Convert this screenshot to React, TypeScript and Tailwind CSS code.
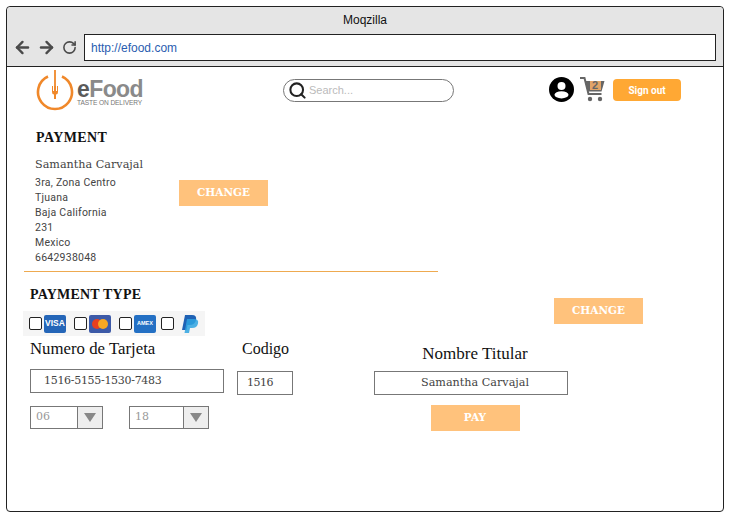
import { ArrowLeft, ArrowRight, RotateCw, Search } from "lucide-react";

const serif = "font-['Liberation_Serif',serif]";
const slab = "font-['DejaVu_Serif',serif]";

function Logo() {
  return (
    <div className="flex w-[114px] items-start">
      <svg width="38" height="42" viewBox="0 0 38 42" className="mt-[2px] shrink-0">
        <path d="M12 7.5 A17 17 0 1 0 26 7.5" fill="none" stroke="#f0882a" strokeWidth="2.6" />
        <path d="M19 1 V24" stroke="#f0882a" strokeWidth="1.8" />
        <path d="M16 17 V23 Q16 25.5 18 25.5 V30 H20 V25.5 Q22 25.5 22 23 V17 H21 V22 H20 V17 H18 V22 H17 V17 Z" fill="#f0882a" />
      </svg>
      <div className="ml-[3px] mt-[12px] whitespace-nowrap font-['Liberation_Sans',sans-serif]">
        <div className="text-[23px] font-bold leading-[20px] tracking-[-0.6px] text-[#8a8a8a]">
          <span className="text-[#5a5a5a]">e</span>Food
        </div>
        <div className="text-[6.6px] leading-[7px] tracking-[-0.1px] text-[#777]">TASTE ON DELIVERY</div>
      </div>
    </div>
  );
}

function CartIcon() {
  return (
    <svg width="25" height="26" viewBox="0 0 25 26">
      <path d="M0 1 H4.5 L8.5 17 H21.5" fill="none" stroke="#666" strokeWidth="2" />
      <path d="M5 4 H24.5 L21.5 14.5 H8 Z" fill="#666" />
      <rect x="10" y="4" width="11" height="9" fill="#e2a468" />
      <text x="15" y="12" textAnchor="middle" fontSize="11" fontWeight="700" fill="#666" fontFamily="Liberation Sans">2</text>
      <circle cx="10" cy="22" r="2.2" fill="#666" />
      <circle cx="20" cy="22" r="2.2" fill="#666" />
    </svg>
  );
}

function UserIcon() {
  return (
    <svg width="25" height="25" viewBox="0 0 25 25">
      <circle cx="12.5" cy="12.5" r="12.5" fill="#000" />
      <circle cx="12.5" cy="9" r="4" fill="#fff" />
      <ellipse cx="12.5" cy="17.8" rx="7" ry="3.6" fill="#fff" />
    </svg>
  );
}

function ChangeButton({ label, className = "" }: { label: string; className?: string }) {
  return (
    <div className={`flex h-[26px] w-[89px] items-center justify-center bg-[#ffc27c] text-[10.5px] font-bold text-white ${slab} ${className}`}>
      {label}
    </div>
  );
}

function Check({ className = "" }: { className?: string }) {
  return <span className={`block h-[13px] w-[13px] shrink-0 rounded-[2px] border border-[#222] bg-white ${className}`} />;
}

function PaymentOptions() {
  return (
    <div className="mt-[7px] ml-[-7px] flex h-[25px] w-[182px] items-center bg-[#f5f5f5] pl-[6px]">
      <Check />
      <span className="ml-[2px] flex h-[18px] w-[22px] items-center justify-center rounded-[2px] bg-[#2566b8] font-['Liberation_Sans',sans-serif] text-[8.5px] font-bold text-white">
        VISA
      </span>
      <Check className="ml-[8px]" />
      <span className="ml-[2px] flex h-[18px] w-[22px] items-center justify-center rounded-[2px] bg-[#3d5aa8]">
        <svg width="16" height="10" viewBox="0 0 16 10">
          <circle cx="5" cy="5" r="5" fill="#e8401f" />
          <circle cx="11" cy="5" r="5" fill="#f7a823" />
        </svg>
      </span>
      <Check className="ml-[8px]" />
      <span className="ml-[2px] flex h-[18px] w-[22px] items-center justify-center rounded-[2px] bg-[#2470c4] font-['Liberation_Sans',sans-serif] text-[5.5px] font-bold text-white">
        AMEX
      </span>
      <Check className="ml-[5px]" />
      <svg width="20" height="20" viewBox="0 0 20 20" className="ml-[5px] shrink-0">
        <path d="M6 1 H13 Q18 1 17 6 Q16 11 10.5 11 H8.5 L7.5 16 H3 Z" fill="#1f62b5" />
        <path d="M8 5 H15 Q20 5 19 9.5 Q18 14 13 14 H11 L10 19 H5.5 Z" fill="#2ea3e0" opacity="0.85" />
      </svg>
    </div>
  );
}

function Select({ value, className = "" }: { value: string; className?: string }) {
  return (
    <div className={`flex h-[23px] border border-[#777] text-[11px] text-[#999] ${slab} ${className}`}>
      <span className="flex flex-1 items-center pl-[5px]">{value}</span>
      <span className="flex w-[25px] items-center justify-center border-l border-[#777] bg-[#eeeeee]">
        <span className="h-0 w-0 border-x-[6px] border-t-[9px] border-x-transparent border-t-[#888]" />
      </span>
    </div>
  );
}

export default function App() {
  return (
    <div className="h-[518px] w-[734px] overflow-hidden bg-white pl-[6px] pt-[6px]">
      <div className="h-[506px] w-[718px] rounded-[4px] border border-[#222]">
        <div className="h-[60px] rounded-t-[4px] border-b border-[#222] bg-[#e5e5e5]">
          <div className="pt-[5px] text-center font-['Liberation_Sans',sans-serif] text-[12px] leading-[16px] text-[#111]">Moqzilla</div>
          <div className="mt-[6px] flex items-center pl-[6px] pr-[7px]">
            <ArrowLeft size={19} strokeWidth={3} className="text-[#4a4a4a]" />
            <ArrowRight size={19} strokeWidth={3} className="ml-[5px] text-[#4a4a4a]" />
            <RotateCw size={15} strokeWidth={2.5} className="ml-[6px] text-[#4a4a4a]" />
            <div className="ml-[7px] flex h-[27px] flex-1 items-center border border-[#222] bg-white pl-[6px] font-['Liberation_Sans',sans-serif] text-[12px] text-[#2a5db0]">
              http://efood.com
            </div>
          </div>
        </div>

        <div className="flex h-[48px] items-start pl-[29px]">
          <Logo />
          <div className="ml-[133px] mt-[12px] flex h-[23px] w-[171px] items-center rounded-full border border-[#777] pl-[4px] font-['Liberation_Sans',sans-serif] text-[11px] text-[#bbb]">
            <Search size={19} strokeWidth={2.6} className="text-[#222]" />
            <span className="ml-[2px]">Search...</span>
          </div>
          <div className="ml-[95px] mt-[10px]"><UserIcon /></div>
          <div className="ml-[6px] mt-[10px]"><CartIcon /></div>
          <div className="ml-[8px] mt-[12px] flex h-[22px] w-[68px] items-center justify-center rounded-[4px] bg-[#ffa834] font-['Roboto',sans-serif] text-[10px] font-bold text-white">
            Sign out
          </div>
        </div>

        <div className="pl-[17px]">
          <h2 className={`ml-[12px] mt-[14px] text-[14px] font-bold leading-[18px] tracking-[0.4px] text-[#111] ${serif}`}>PAYMENT</h2>
          <div className="flex items-start">
            <div className="w-[155px] pl-[11px]">
              <div className={`mt-[10px] text-[11.2px] leading-[16px] text-[#444] ${slab}`}>Samantha Carvajal</div>
              <div className="mt-[2px] font-['Roboto',sans-serif] text-[10.5px] leading-[15px] tracking-[0.25px] text-[#444]">
                <div>3ra, Zona Centro</div>
                <div>Tjuana</div>
                <div>Baja California</div>
                <div>231</div>
                <div>Mexico</div>
                <div>6642938048</div>
              </div>
            </div>
            <ChangeButton label="CHANGE" className="mt-[33px]" />
          </div>
          <div className="mt-[6px] h-px w-[414px] bg-[#eeaa50]" />

          <div className="flex items-start">
            <div className="w-[530px] pl-[6px]">
              <h2 className={`mt-[14px] text-[14px] font-bold leading-[18px] tracking-[0.2px] text-[#111] ${serif}`}>PAYMENT TYPE</h2>
              <PaymentOptions />
            </div>
            <ChangeButton label="CHANGE" className="mt-[26px]" />
          </div>

          <div className="ml-[6px] mt-[2px] flex items-start">
            <div className="w-[207px]">
              <div className={`text-[16.8px] leading-[22px] text-[#111] ${serif}`}>Numero de Tarjeta</div>
              <div className={`mt-[9px] flex h-[24px] w-[194px] items-center border border-[#777] pl-[13px] text-[11px] tracking-[-0.3px] text-[#444] ${slab}`}>
                1516-5155-1530-7483
              </div>
              <div className="mt-[13px] flex">
                <Select value="06" className="w-[73px]" />
                <Select value="18" className="ml-[26px] w-[80px]" />
              </div>
            </div>
            <div className="w-[137px]">
              <div className={`ml-[5px] text-[16px] leading-[22px] text-[#111] ${serif}`}>Codigo</div>
              <div className={`mt-[11px] flex h-[24px] w-[56px] items-center border border-[#777] pl-[9px] text-[11px] tracking-[-0.5px] text-[#444] ${slab}`}>
                1516
              </div>
            </div>
            <div className="flex w-[194px] flex-col items-center">
              <div className={`ml-[8px] mt-[5px] text-[17px] leading-[22px] text-[#111] ${serif}`}>Nombre Titular</div>
              <div className={`mt-[6px] flex h-[24px] w-[194px] items-center justify-center border border-[#777] pl-[8px] text-[11.2px] text-[#444] ${slab}`}>
                Samantha Carvajal
              </div>
              <ChangeButton label="PAY" className="ml-[8px] mt-[10px]" />
            </div>
          </div>
        </div>
      </div>
    </div>
  );
}
